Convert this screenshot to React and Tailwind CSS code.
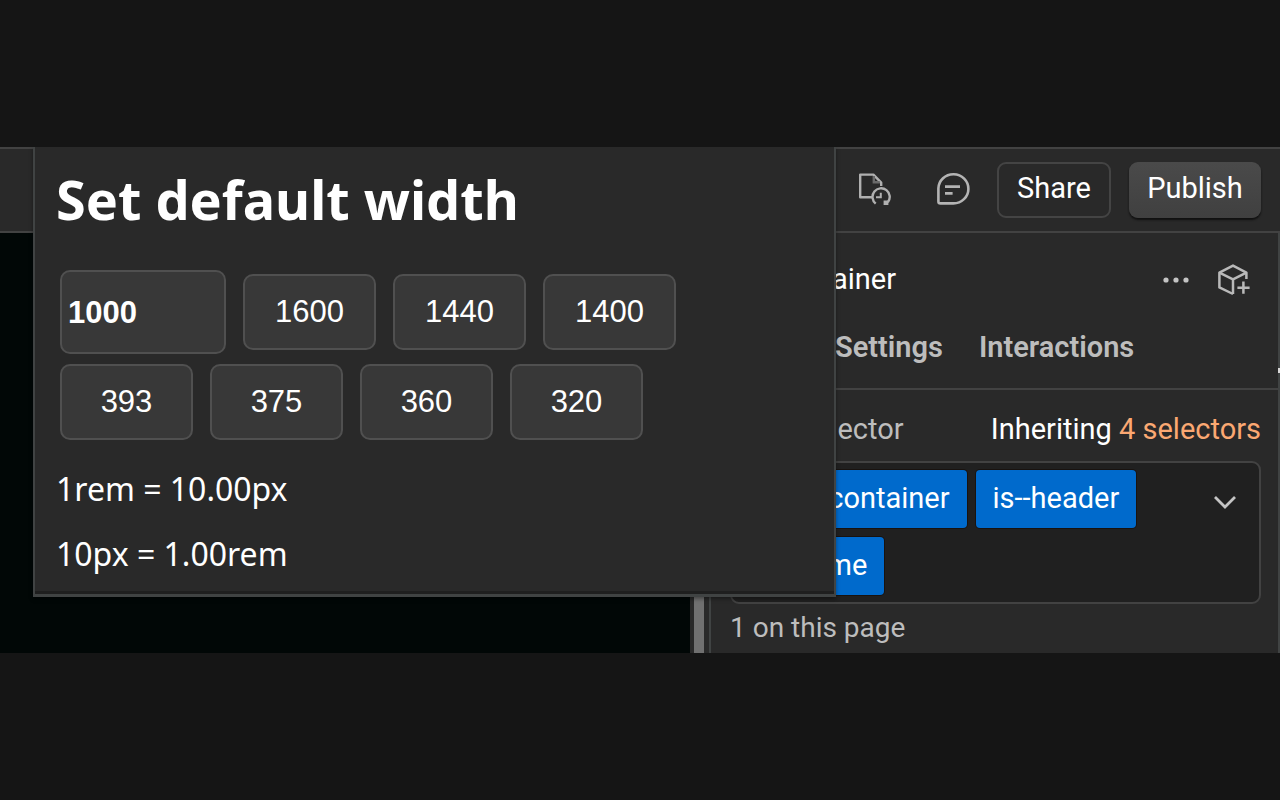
import React from "react";

const widths = ["1600", "1440", "1400", "393", "375", "360", "320"];

function PageIcon() {
  return (
    <svg viewBox="0 0 34 34" className="size-[34px]" fill="none" stroke="#b0b0b0" strokeWidth="2.4" aria-hidden="true">
      <path d="M16 25.2H3.2V2.6H16.4l7.8 8V14" strokeLinejoin="round" />
      <path d="M16.8 4v6.2h6" stroke="#6a6a6a" />
      <path d="M18.7 31.6a8.6 8.6 0 1 1 12.2-1.4" />
      <path d="M19 25.2h4.8v-4.4" strokeWidth="2" />
      <path d="M26.6 28.4h4.8v4.6h-4.8z" fill="#b0b0b0" stroke="none" />
    </svg>
  );
}

function CommentIcon() {
  return (
    <svg viewBox="0 0 34 34" className="size-[34px]" fill="none" stroke="#b4b4b4" strokeWidth="2.6" aria-hidden="true">
      <path d="M2.4 29.4V16.4A15 14.6 0 1 1 17.4 31.4H4.4a2 2 0 0 1-2-2Z" strokeLinejoin="round" />
      <path d="M9 14.6h15M9 21.4h7.6" />
    </svg>
  );
}

function CubePlusIcon() {
  return (
    <svg viewBox="0 0 34 34" className="size-[34px]" fill="none" stroke="#b9b9b9" strokeWidth="2.5" strokeLinejoin="round" aria-hidden="true">
      <path d="M17 31 3.4 24.4V9.6L17 2.6l13.4 7V16" />
      <path d="M3.4 9.6 17 16.4l13.4-6.8M17 16.4V31" />
      <path d="M27.4 18.6v12.2M21.4 24.7h12.2" />
    </svg>
  );
}

function Chip({ children }) {
  return (
    <button className="h-[58px] rounded-[4px] bg-[#006acc] px-[17px] text-[29px] text-white shadow-[0_0_0_1px_#191310]">
      {children}
    </button>
  );
}

function TopBar() {
  return (
    <header className="flex h-[86px] items-center justify-end gap-[18px] border-y-2 border-[#424242] bg-[#292929] pr-[19px]">
      <div className="mr-[9px] flex gap-[45px] pb-[2px]">
        <button aria-label="Page status">
          <PageIcon />
        </button>
        <button aria-label="Comments">
          <CommentIcon />
        </button>
      </div>
      <button className="h-[56px] w-[114px] rounded-[9px] border-2 border-[#444444] pb-[2px] text-[29px] text-white">
        Share
      </button>
      <button className="h-[56px] w-[132px] rounded-[9px] bg-linear-to-b from-[#4a4a4a] to-[#404040] pb-[2px] text-[29px] text-white shadow-[0_2px_2px_#101010]">
        Publish
      </button>
    </header>
  );
}

function StylePanel() {
  return (
    <aside className="w-[571px] shrink-0 border-x-2 border-[#404343] bg-[#292929] text-[#bdbdbd]">
      <div className="border-b-2 border-[#424242]">
        <div className="flex h-[93px] items-center justify-between pr-[28px] pl-[60px]">
          <h2 className="text-[29px] text-white">Container</h2>
          <div className="flex items-center gap-[27px]">
            <button aria-label="More options">
              <svg viewBox="0 0 26 6" className="h-[6px] w-[26px]" fill="#c4c4c4" aria-hidden="true">
                <circle cx="3" cy="3" r="2.6" />
                <circle cx="13" cy="3" r="2.6" />
                <circle cx="23" cy="3" r="2.6" />
              </svg>
            </button>
            <button aria-label="Create component">
              <CubePlusIcon />
            </button>
          </div>
        </div>
        <nav className="flex h-[62px] gap-[36px] pl-[20px] text-[29px] font-semibold">
          <button className="h-[44px] w-[68px]">Style</button>
          <button className="h-[44px]">Settings</button>
          <button className="h-[44px]">Interactions</button>
        </nav>
      </div>
      <div className="pr-[17px] pl-[19px] text-[29px]">
        <div className="flex h-[71px] items-center justify-between pt-2">
          <span>Style selector</span>
          <a href="#selectors" className="text-white">
            Inheriting <span className="text-[#fba872]">4 selectors</span>
          </a>
        </div>
        <div className="flex justify-between rounded-[9px] border-2 border-[#424242] bg-[#202020] p-[7px]">
          <div className="flex flex-wrap gap-[9px]">
            <Chip>main-container</Chip>
            <Chip>is--header</Chip>
            <Chip>is--home</Chip>
          </div>
          <button aria-label="Show selectors" className="mt-[24px] mr-[15px] h-[16px] shrink-0">
            <svg viewBox="0 0 24 16" className="h-[16px] w-[24px]" fill="none" stroke="#c4c4c4" strokeWidth="2.8" aria-hidden="true">
              <path d="m2 3 10 10L22 3" />
            </svg>
          </button>
        </div>
        <p className="h-[49px] text-[28px] leading-[48px]">1 on this page</p>
      </div>
    </aside>
  );
}

function WidthDialog() {
  return (
    <section className="absolute top-0 left-[33px] h-[450px] w-[803px] border-x-2 border-b-[3px] border-[#404343] bg-[#292929] px-[21px] font-['Noto_Sans',sans-serif] text-white shadow-[inset_0_-3px_0_#1f1f1f,0_2px_4px_#00000066]">
      <h1 className="pt-[17px] text-[54px] leading-[70px] font-bold">Set default width</h1>
      <div className="mt-[36px] flex flex-wrap items-center gap-x-[17px] gap-y-[10px] pr-[80px] pl-1 font-['Liberation_Sans',sans-serif] text-[31px]">
        <input
          aria-label="Default width"
          defaultValue="1000"
          className="h-[84px] w-[166px] rounded-[10px] border-2 border-[#505050] bg-[#383838] px-[6px] pt-[2px] font-bold"
        />
        {widths.map((width) => (
          <button key={width} className="h-[76px] w-[133px] rounded-[10px] border-2 border-[#505050] bg-[#383838] pt-px">
            {width}
          </button>
        ))}
      </div>
      <p className="mt-[27px] text-[32px] leading-[44px]">1rem = 10.00px</p>
      <p className="mt-[21px] text-[32px] leading-[44px]">10px = 1.00rem</p>
    </section>
  );
}

export default function App() {
  return (
    <div className="flex min-h-screen flex-col justify-center bg-[#151515] font-[Roboto,sans-serif]">
      <main className="relative overflow-hidden">
        <TopBar />
        <div className="flex">
          <div className="grow bg-[#010706]" />
          <div className="w-[19px] shrink-0 border-r-[5px] border-l-4 border-[#292929] bg-[#707070]" />
          <StylePanel />
        </div>
        <WidthDialog />
        <div className="absolute top-[221px] right-0 h-[5px] w-[2px] bg-[#d8d8d8]" />
      </main>
    </div>
  );
}
